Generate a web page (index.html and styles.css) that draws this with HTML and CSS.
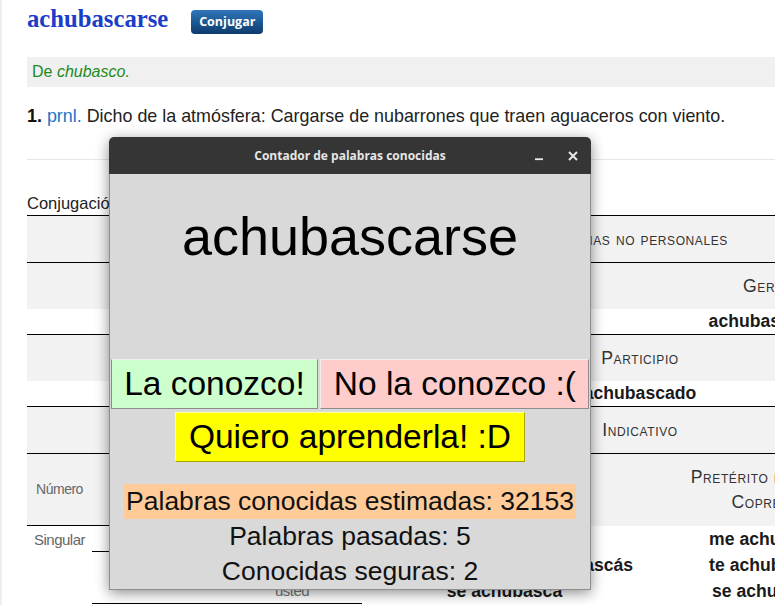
FILE: index.html
```html
<!DOCTYPE html>
<html lang="es">
<head>
<meta charset="utf-8">
<title>achubascarse</title>
<link rel="stylesheet" href="styles.css">
</head>
<body>
<div class="page">
  <header class="entry-head">
    <h1 class="lemma">achubascarse</h1>
    <a class="btn-conj">Conjugar</a>
  </header>
  <div class="etym">De <i>chubasco.</i></div>
  <p class="def"><b>1.</b> <abbr class="abbr">prnl.</abbr> Dicho de la atmósfera: Cargarse de nubarrones que traen aguaceros con viento.</p>
  <hr class="sep">
  <table class="conj">
    <caption>Conjugación de achubascarse</caption>
    <colgroup>
      <col class="c1"><col class="c2"><col class="c3"><col class="c4"><col class="c5"><col class="c6">
    </colgroup>
    <tr class="band rule">
      <th colspan="6" class="sc tall">Formas no personales</th>
    </tr>
    <tr class="band rule">
      <th colspan="4" class="sc tall">Infinitivo</th>
      <th class="sc tall">Gerundio</th>
      <th class="tall"></th>
    </tr>
    <tr>
      <td colspan="4" class="form">achubascarse</td>
      <td class="form">achubascándose</td>
      <td></td>
    </tr>
    <tr class="band rule">
      <th colspan="6" class="sc tall">Participio</th>
    </tr>
    <tr>
      <td colspan="6" class="form">achubascado</td>
    </tr>
    <tr class="band rule">
      <th colspan="6" class="sc tall">Indicativo</th>
    </tr>
    <tr class="band rule head">
      <th class="lbl under">Número</th>
      <th class="lbl under wrap">Personas del discurso</th>
      <th class="lbl under wrap">Pronombres personales</th>
      <th class="sc">Presente</th>
      <th class="sc">Pretérito imperfecto /<br>Copretérito</th>
      <th class="sc">Pretérito perfecto simple /<br>Pretérito</th>
    </tr>
    <tr class="frow">
      <td rowspan="3" class="lbl num">Singular</td>
      <td class="lbl under">Primera</td>
      <td class="lbl under">yo</td>
      <td class="form">me achubasco</td>
      <td class="form">me achubascaba</td>
      <td class="form">me achubasqué</td>
    </tr>
    <tr class="frow">
      <td rowspan="2" class="lbl under">Segunda</td>
      <td class="lbl under">tú / vos</td>
      <td class="form">te achubascas / te achubascás</td>
      <td class="form">te achubascabas</td>
      <td class="form">te achubascaste</td>
    </tr>
    <tr class="frow">
      <td class="lbl under">usted</td>
      <td class="form">se achubasca</td>
      <td class="form">se achubascaba</td>
      <td class="form">se achubascó</td>
    </tr>
  </table>
</div>

<div class="dialog">
  <div class="titlebar">
    <span></span>
    <span class="title">Contador de palabras conocidas</span>
    <span class="controls">
      <span class="ctl"><svg width="16" height="16" viewBox="0 0 16 16"><rect x="4" y="10.3" width="8" height="1.8" fill="#e8e8e8"/></svg></span>
      <span class="ctl"><svg width="16" height="16" viewBox="0 0 16 16"><path d="M4 4 L12 12 M12 4 L4 12" stroke="#e8e8e8" stroke-width="2" fill="none"/></svg></span>
    </span>
  </div>
  <div class="dlg-body">
    <div class="word">achubascarse</div>
    <div class="choice-row">
      <button class="choice yes">La conozco!</button>
      <button class="choice no">No la conozco :(</button>
    </div>
    <div class="choice-row second">
      <button class="choice learn">Quiero aprenderla! :D</button>
    </div>
    <div class="stats">
      <div><span class="estimate">Palabras conocidas estimadas: 32153</span></div>
      <div>Palabras pasadas: 5</div>
      <div>Conocidas seguras: 2</div>
    </div>
  </div>
</div>
</body>
</html>
```

FILE: styles.css
```css
html, body {
  margin: 0;
  overflow: hidden;
}
body {
  font-family: "Liberation Sans", Arial, sans-serif;
  color: #222;
  background: #fff;
  position: relative;
  width: 775px;
  height: 605px;
}
.page {
  width: 775px;
  height: 605px;
  box-sizing: border-box;
  border-left: 2px solid #eeeeee;
  padding-left: 25px;
  overflow: hidden;
}
.entry-head {
  display: flex;
  align-items: flex-start;
  height: 57px;
}
.lemma {
  margin: 4px 0 0;
  font: bold 24.7px/30px "Liberation Serif", "Times New Roman", serif;
  color: #1b3ec9;
}
.btn-conj {
  margin: 10px 0 0 23px;
  width: 72px;
  height: 24px;
  box-sizing: border-box;
  border-radius: 4px;
  background: linear-gradient(#2f76bb, #0c3b6c);
  color: #fff;
  font: 700 12.5px/24px "Open Sans", sans-serif;
  text-align: center;
}
.etym {
  height: 30px;
  line-height: 30px;
  background: #f0f0f0;
  color: #1d8a1d;
  font-size: 16px;
  padding-left: 5px;
}
.def {
  margin: 19px 0 0;
  font-size: 17.9px;
  line-height: 20px;
  color: #222;
  white-space: nowrap;
}
.def b { color: #111; }
.abbr {
  color: #1a76c6;
  text-decoration: none;
}
.sep {
  margin: 33px 0 0;
  border: 0;
  border-top: 1px solid #e6e6e6;
  height: 0;
}
.conj {
  margin-top: 33px;
  width: 1226px;
  table-layout: fixed;
  border-collapse: separate;
  border-spacing: 0;
}
.conj caption {
  text-align: left;
  font-size: 16.5px;
  line-height: 20px;
  padding-bottom: 2px;
  color: #222;
  white-space: nowrap;
}
.c1 { width: 65px; }
.c2 { width: 130px; }
.c3 { width: 140px; }
.c4 { width: 285px; }
.c5 { width: 266px; }
.c6 { width: 340px; }
.conj th, .conj td {
  padding: 0;
  text-align: center;
  vertical-align: middle;
  font-weight: normal;
  line-height: 25px;
  white-space: nowrap;
}
.conj .band th, .conj .band td { background: #f2f2f2; }
.conj .rule th, .conj .rule td { border-top: 1px solid #000; }
.conj .tall { line-height: 46px; }
.conj .sc {
  font-variant: small-caps;
  font-size: 17.6px;
  letter-spacing: 0.6px;
  color: #333;
}
.conj .form {
  font-weight: bold;
  font-size: 17.6px;
  color: #1a1a1a;
}
.conj .head th { padding-top: 11px; padding-bottom: 11px; }
.conj .lbl {
  color: #666;
  font-size: 14px;
  letter-spacing: -0.5px;
}
.conj .head .wrap {
  white-space: normal;
  line-height: 18px;
  padding-left: 26px;
}
.conj .num {
  vertical-align: top;
  font-size: 15px;
  padding-top: 1px;
}
.conj .under { border-bottom: 1px solid #000; }
.conj .frow .lbl.under { font-size: 15px; color: #777; }

/* dialog window */
.dialog {
  position: absolute;
  left: 109px;
  top: 137px;
  width: 482px;
  border-radius: 5px 5px 0 0;
  box-shadow: 0 3px 14px rgba(0, 0, 0, 0.45);
}
.titlebar {
  height: 37px;
  background: #353535;
  border-radius: 5px 5px 0 0;
  display: grid;
  grid-template-columns: 1fr auto 1fr;
  align-items: center;
}
.title {
  font: 700 12px/1 "Open Sans", sans-serif;
  color: #e6e6e6;
}
.controls {
  justify-self: end;
  display: flex;
  gap: 9.5px;
  padding-right: 6.5px;
}
.ctl {
  width: 24px;
  height: 16px;
  display: flex;
  justify-content: center;
}
.ctl svg { display: block; }
.dlg-body {
  background: #d9d9d9;
  border: 1px solid #8e8e8e;
  border-top: none;
  color: #111;
}
.word {
  height: 185px;
  box-sizing: border-box;
  padding-top: 31px;
  text-align: center;
  font-size: 54px;
  line-height: 62px;
  color: #000;
}
.choice-row {
  display: flex;
  justify-content: center;
  gap: 2px;
}
.choice-row.second { margin-top: 3px; }
.choice {
  margin: 0;
  height: 50px;
  padding: 0 12.5px;
  font-family: "Liberation Sans", Arial, sans-serif;
  font-size: 33.5px;
  line-height: 48px;
  color: #000;
  border: 1px solid #8c8c8c;
  border-top-color: #eeeeee;
  border-left-color: #eeeeee;
  border-radius: 0;
}
.yes { background: #ccffcc; border-left-color: #8c8c8c; }
.no { background: #ffcccc; }
.learn {
  background: #ffff00;
  border-color: #ffff99 #a6a600 #a6a600 #ffff99;
}
.stats {
  margin-top: 22px;
  text-align: center;
  font-size: 26.5px;
  line-height: 35px;
}
.estimate {
  display: inline-block;
  background: #ffcc99;
  padding: 0 2px;
}
```
